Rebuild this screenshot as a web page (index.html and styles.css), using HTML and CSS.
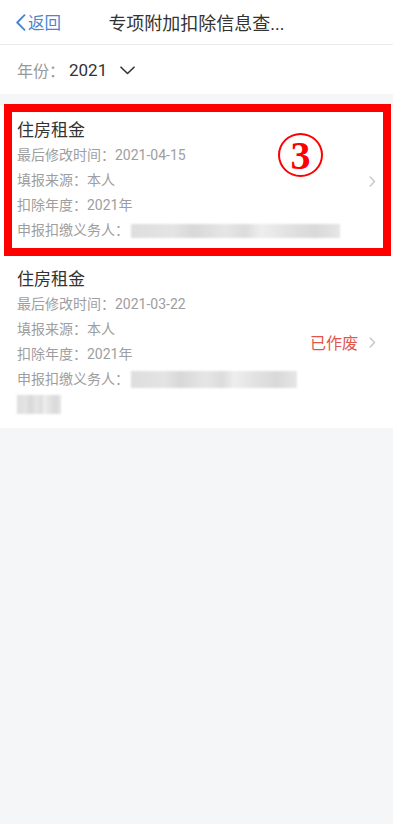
FILE: index.html
```html
<!DOCTYPE html>
<html lang="zh">
<head>
<meta charset="utf-8">
<title>专项附加扣除信息查询</title>
<link rel="stylesheet" href="styles.css">
</head>
<body>
<header class="topbar">
  <a class="back">
    <svg class="back-icon" width="11" height="17" viewBox="0 0 11 17"><polyline points="9.5,1.2 2.2,8.5 9.5,15.8" fill="none" stroke="#4a86cf" stroke-width="1.9" stroke-linecap="round" stroke-linejoin="round"/></svg>
    <span>返回</span>
  </a>
  <h1 class="title">专项附加扣除信息查...</h1>
  <span></span>
</header>
<div class="year-row">
  <span class="year-label">年份：</span><span class="year-value">2021</span>
  <svg class="down" width="15" height="9" viewBox="0 0 15 9"><polyline points="1,1.2 7.5,7.5 14,1.2" fill="none" stroke="#333" stroke-width="1.6" stroke-linecap="round" stroke-linejoin="round"/></svg>
</div>
<main class="list">
  <div class="card">
    <div class="info">
      <div class="card-title">住房租金</div>
      <div class="row">最后修改时间：2021-04-15</div>
      <div class="row">填报来源：本人</div>
      <div class="row">扣除年度：2021年</div>
      <div class="row">申报扣缴义务人：<span class="blur blur-a"></span></div>
    </div>
    <div class="side">
      <svg class="arrow" width="7" height="11" viewBox="0 0 7 11"><polyline points="1.2,1 5.5,5.5 1.2,10" fill="none" stroke="#c6c6c6" stroke-width="1.4" stroke-linecap="round" stroke-linejoin="round"/></svg>
    </div>
  </div>
  <div class="card">
    <div class="info">
      <div class="card-title">住房租金</div>
      <div class="row">最后修改时间：2021-03-22</div>
      <div class="row">填报来源：本人</div>
      <div class="row">扣除年度：2021年</div>
      <div class="row">申报扣缴义务人：<span class="blur blur-b"></span></div>
      <div class="row-cont"><span class="blur blur-c"></span></div>
    </div>
    <div class="side">
      <span class="status">已作废</span>
      <svg class="arrow" width="7" height="11" viewBox="0 0 7 11"><polyline points="1.2,1 5.5,5.5 1.2,10" fill="none" stroke="#c6c6c6" stroke-width="1.4" stroke-linecap="round" stroke-linejoin="round"/></svg>
    </div>
  </div>
</main>
<div class="mark"><span class="mark-num">3</span></div>
</body>
</html>
```
FILE: styles.css
```css
html, body {
  margin: 0;
  padding: 0;
}
body {
  background: #f5f6f8;
  font-family: Roboto, "Noto Sans CJK SC", sans-serif;
  min-height: 824px;
  position: relative;
}
.topbar {
  height: 44px;
  background: #fff;
  border-bottom: 1px solid #ebebeb;
  display: grid;
  grid-template-columns: 1fr auto 1fr;
  align-items: center;
}
.back {
  display: flex;
  align-items: center;
  padding-left: 15px;
  color: #4a86cf;
  font-size: 16.5px;
  gap: 2px;
}
.title {
  margin: 0;
  font-size: 18px;
  font-weight: 400;
  color: #333;
}
.year-row {
  height: 49px;
  background: #fff;
  display: flex;
  align-items: center;
  padding-left: 17px;
  font-size: 16px;
}
.year-label { color: #999; }
.year-value { color: #333; margin-left: 4px; font-size: 17px; }
.down { margin-left: 13px; margin-top: 1px; }
.list {
  margin-top: 12px;
}
.card {
  background: #fff;
  display: flex;
  align-items: center;
  padding: 13px 17px 12px 17px;
}
.info { flex: 1; }
.card-title {
  font-size: 17px;
  line-height: 22px;
  color: #333;
  margin-bottom: 2px;
}
.row {
  font-size: 14px;
  line-height: 25px;
  color: #9e9e9e;
  display: flex;
  align-items: center;
}
.row-cont {
  height: 24px;
  display: flex;
  align-items: center;
}
.side {
  display: flex;
  align-items: center;
}
.status {
  color: #e0574c;
  font-size: 16px;
  margin-right: 11px;
}
.blur {
  display: inline-block;
  filter: blur(1.2px);
  background: linear-gradient(90deg, #dedede 0%, #e4e4e4 20%, #d8d8d8 30%, #e6e6e6 45%, #dcdcdc 55%, #eeeeee 62%, #e2e2e2 75%, #d9d9d9 88%, #e6e6e6 100%);
}
.blur-a { width: 209px; height: 14px; margin-left: 2px; }
.blur-b { width: 166px; height: 17px; margin-left: 2px; }
.blur-c { width: 44px; height: 19px; }
.mark {
  position: absolute;
  left: 4px;
  top: 104px;
  width: 387px;
  height: 152px;
  box-sizing: border-box;
  border: 8px solid #ff0000;
  pointer-events: none;
}
.mark-num {
  position: absolute;
  left: 266px;
  top: 21px;
  width: 41px;
  height: 40px;
  border: 2.7px solid #ff0000;
  border-radius: 50%;
  color: #ff0000;
  font-family: "Liberation Serif", "DejaVu Serif", serif;
  font-weight: 700;
  font-size: 40px;
  line-height: 41px;
  text-align: center;
}
```
